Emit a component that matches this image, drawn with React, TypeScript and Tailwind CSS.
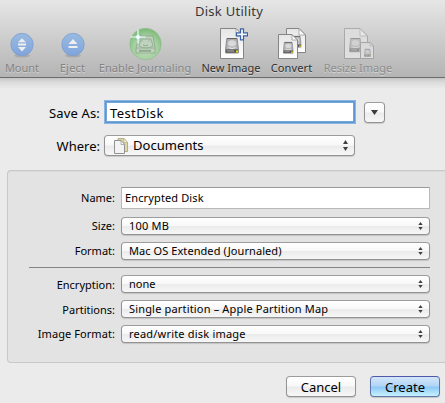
import React from "react";

function Drive({ x, y, s = 1 }: { x: number; y: number; s?: number }) {
  return (
    <g transform={`translate(${x} ${y}) scale(${s})`}>
      <path d="M1.8.5h10.4l1.1 9.5v5H.7v-5z" fill="#b4b4b7" stroke="#858588" strokeWidth=".9" />
      <path d="M2 .6h10" stroke="#5f5f62" strokeWidth="1" />
      <ellipse cx="7" cy="5.4" rx="4.6" ry="3.6" fill="#d9d9dc" stroke="#9d9da2" strokeWidth=".6" />
      <path d="M3.5 9.6q3.5 1.8 7 0" stroke="#f2f2f2" fill="none" />
      <path d="M.8 11.3h12.4v3.4H.8z" fill="#59595c" />
      <path d="M2 12.2h7v1.4H2z" fill="#98989b" />
      <path d="M11 12.5h2v2h-2z" fill="#ecd900" />
    </g>
  );
}

function Doc({ x, y, w, h, f }: { x: number; y: number; w: number; h: number; f: number }) {
  return (
    <g transform={`translate(${x} ${y})`}>
      <path d={`M.5.5H${w - f}L${w - 0.5} ${f}V${h - 0.5}H.5z`} fill="url(#paper)" stroke="#858585" />
      <path d={`M${w - f} .8V${f}H${w - 0.8}z`} fill="#fff" stroke="#9a9a9a" strokeWidth=".8" />
    </g>
  );
}

function Paper() {
  return (
    <defs>
      <linearGradient id="paper" x1="0" y1="0" x2="0" y2="1">
        <stop offset="0" stopColor="#e5e5e5" />
        <stop offset="1" stopColor="#ffffff" />
      </linearGradient>
      <radialGradient id="orb" cx=".5" cy=".65" r=".6">
        <stop offset="0" stopColor="#bfdcbc" />
        <stop offset=".65" stopColor="#a4cfa0" />
        <stop offset="1" stopColor="#82bd7c" />
      </radialGradient>
      <linearGradient id="blue" x1="0" y1="0" x2="0" y2="1">
        <stop offset="0" stopColor="#99bbe0" />
        <stop offset="1" stopColor="#80a4dc" />
      </linearGradient>
    </defs>
  );
}

function BlueDisc({ children }: { children: React.ReactNode }) {
  return (
    <svg width="26" height="32" viewBox="0 0 26 32" className="shrink-0">
      <Paper />
      <ellipse cx="13" cy="27.6" rx="8" ry="2" fill="#8d8d8d" opacity=".45" />
      <circle cx="13" cy="16.5" r="11.2" fill="url(#blue)" stroke="#799bcb" strokeWidth=".7" />
      <g fill="#eeeeef">{children}</g>
    </svg>
  );
}

function Tool({ box, label, tone, children }: { box: string; label: string; tone: string; children: React.ReactNode }) {
  return (
    <div className={`flex shrink-0 flex-col items-center ${box}`}>
      {children}
      <span className={`mt-px whitespace-nowrap text-[11px] leading-[14px] [text-shadow:0_1px_0_#ffffff66] ${tone}`}>{label}</span>
    </div>
  );
}

function Arrows({ big = false }: { big?: boolean }) {
  return (
    <svg width="5" height={big ? 11 : 8} viewBox={big ? "0 0 5 11" : "0 0 5 8"} className="ml-auto shrink-0" fill="#404040">
      {big ? <path d="M2.5 0 5 4H0zM2.5 11 5 7H0z" /> : <path d="M2.5 0 4.7 3H.3zM2.5 8 4.7 5H.3z" />}
    </svg>
  );
}

const face =
  "rounded-[4px] border border-[#929292] border-t-[#9c9c9c] bg-[linear-gradient(#ffffff,#f8f8f8_48%,#ebebeb_52%,#f7f7f7)] shadow-[0_1px_1px_#00000024]";

function Field({ label, value, spacing, labelStyle }: { label: string; value: string; spacing: string; labelStyle: string }) {
  return (
    <div className="mt-[7px] flex h-[18px] items-center">
      <span className={`w-[107px] shrink-0 whitespace-nowrap text-right text-[11px] leading-[18px] ${labelStyle}`}>{label}</span>
      <div className={`ml-[6px] flex h-[18px] w-[309px] shrink-0 items-center pl-[7px] pr-[6px] ${face}`}>
        <span className={`whitespace-nowrap text-[11px] leading-[16px] ${spacing}`}>{value}</span>
        <Arrows />
      </div>
    </div>
  );
}

export default function App() {
  return (
    <div className="h-[403px] w-[445px] overflow-hidden bg-[#ebebeb] font-['Noto_Sans','Open_Sans',sans-serif] text-black">
      <header className="h-[78px] border-b border-[#6c6c6c] bg-[linear-gradient(#e6e6e6,#d2d2d2_40%,#b4b4b4)]">
        <h1 className="h-[28px] pl-[195px] pt-[2px] text-[13px] leading-[18px] tracking-[0.26px] text-[#383838]">Disk Utility</h1>
        <div className="flex">
          <Tool box="w-[44px]" label="Mount" tone="text-[#848484]">
            <BlueDisc>
              <path d="M13 10.2 17 14.3H9zM9 15.6h8v2H9zM9 19h8L13 23.4z" />
            </BlueDisc>
          </Tool>
          <Tool box="w-[57px]" label="Eject" tone="text-[#848484] tracking-[0.2px]">
            <BlueDisc>
              <path d="M13 11 17.5 16h-9zM8.5 18h9v2h-9z" />
            </BlueDisc>
          </Tool>
          <Tool box="w-[88px]" label="Enable Journaling" tone="text-[#848484] tracking-[0.1px]">
            <svg width="34" height="32" viewBox="0 0 34 32" className="shrink-0">
              <circle cx="17.5" cy="16" r="15.7" fill="url(#orb)" stroke="#8cbb88" strokeWidth=".6" />
              <g fill="none" stroke="#819b81" opacity=".75">
                <path d="M11 8h14l2 12v5H8v-5z" fill="#c5d2c3" strokeWidth=".8" />
                <path d="M13 11h10l2 7q-7 4-14 0zM8 20h19" strokeWidth=".8" />
                <path d="M11 22.8h12" strokeWidth="2" />
                <path d="M14 12.5v1M21 12.5v1M15 17q3 1.5 5 0" strokeWidth="1" />
              </g>
              <g stroke="#e9ffff" strokeLinecap="round">
                <path d="M3 9h14M10 2v13" strokeWidth="1.2" />
                <path d="m7 6 6 6m0-6-6 6" stroke="#78b8bd" strokeWidth=".7" />
              </g>
              <circle cx="10" cy="9" r="2" fill="#f4ffff" />
            </svg>
          </Tool>
          <Tool box="w-[84px]" label="New Image" tone="text-[#303030]">
            <svg width="34" height="32" viewBox="0 0 34 32" className="shrink-0">
              <Doc x={6} y={0} w={24} h={31} f={8} />
              <Drive x={11} y={10} />
              <path d="M26.5.8h3v4h4v3h-4v4h-3v-4h-4v-3h4z" fill="#f4f7fc" stroke="#3b62a6" strokeWidth="1.2" />
            </svg>
          </Tool>
          <Tool box="w-[37px]" label="Convert" tone="text-[#303030] tracking-[0.15px]">
            <svg width="30" height="32" viewBox="0 0 30 32" className="shrink-0">
              <Doc x={9} y={0} w={20} h={25} f={7} />
              <Drive x={14} y={8} s={0.75} />
              <Doc x={1} y={6} w={20} h={25} f={6} />
              <Drive x={6} y={14} s={0.75} />
            </svg>
          </Tool>
          <Tool box="w-[96px]" label="Resize Image" tone="text-[#8d8d8d]">
            <svg width="32" height="32" viewBox="0 0 32 32" className="shrink-0 opacity-50">
              <Doc x={2} y={0} w={24} h={31} f={8} />
              <Drive x={7} y={10} s={0.92} />
              <Doc x={18} y={14} w={14} h={17} f={4} />
              <Drive x={22} y={21} s={0.5} />
            </svg>
          </Tool>
        </div>
      </header>
      <div className="h-[22px] bg-[linear-gradient(#c5c5c5,#dcdcdc_20%,#ebebeb_50%)]" />
      <div className="flex h-[24px] items-center">
        <span className="w-[100px] whitespace-nowrap pt-[2px] text-right text-[13px] leading-[20px] tracking-[0.15px]">Save As:</span>
        <div className="ml-[5px] flex h-[22px] w-[250px] items-center border border-[#5c97d4] bg-white pl-[4px] shadow-[inset_0_0_0_1px_#72a7dc,0_0_0_1px_#8bb6e2]">
          <span className="pt-px text-[13px] leading-[20px] tracking-[0.4px]">TestDisk</span>
        </div>
        <div className={`ml-[9px] flex h-[21px] w-[21px] items-center justify-center ${face}`}>
          <svg width="7" height="5" viewBox="0 0 7 5" fill="#3d3d3d"><path d="M0 0h7L3.5 5z" /></svg>
        </div>
      </div>
      <div className="mt-[11px] flex h-[21px] items-center">
        <span className="w-[100px] whitespace-nowrap text-right text-[13px] leading-[20px]">Where:</span>
        <div className={`ml-[4px] flex h-[21px] w-[251px] items-center pl-[9px] pr-[6px] ${face}`}>
          <svg width="14" height="16" viewBox="0 0 14 16">
            <path d="M4 .5h6l3.5 4v9H4z" fill="#ddd6a5" stroke="#a79f76" strokeWidth=".8" />
            <path d="M10 .5v4h3.5z" fill="#fffde5" stroke="#aaa17c" strokeWidth=".6" />
            <path d="M.5 2.5H7l3.5 4v9H.5z" fill="#f3f3f3" stroke="#929292" />
            <path d="M7 2.5v4h3.5z" fill="#fff" stroke="#929292" strokeWidth=".7" />
          </svg>
          <span className="ml-[5px] whitespace-nowrap text-[13px] leading-[19px] tracking-[0.05px]">Documents</span>
          <Arrows big />
        </div>
      </div>
      <section className="ml-[7px] mt-[14px] h-[193px] rounded-l-[4px] border border-r-0 border-[#c8c8c8] bg-[#e3e3e3] pt-[16px] shadow-[inset_0_1px_1px_#00000008]">
        <div className="mb-[8px] flex h-[22px] items-center">
          <span className="w-[107px] shrink-0 text-right text-[11px] leading-[18px]">Name:</span>
          <div className="ml-[6px] flex h-[22px] w-[309px] shrink-0 items-center border border-[#b9b9b9] border-t-[#9a9a9a] bg-white pb-px pl-[3px]">
            <span className="whitespace-nowrap text-[11px] leading-[18px] tracking-[0.13px]">Encrypted Disk</span>
          </div>
        </div>
        <Field label="Size:" value="100 MB" spacing="tracking-[0.2px]" labelStyle="" />
        <Field label="Format:" value="Mac OS Extended (Journaled)" spacing="tracking-[0.07px]" labelStyle="" />
        <div className="ml-[21px] mt-[7px] h-px w-[401px] bg-[#858585]" />
        <Field label="Encryption:" value="none" spacing="" labelStyle="pt-[2px]" />
        <Field label="Partitions:" value="Single partition – Apple Partition Map" spacing="tracking-[0.17px]" labelStyle="pt-[2px]" />
        <Field label="Image Format:" value="read/write disk image" spacing="tracking-[0.2px]" labelStyle="tracking-[0.07px]" />
      </section>
      <footer className="mt-[13px] flex gap-[14px] pl-[286px]">
        <button className={`h-[21px] w-[70px] text-[13px] leading-[18px] ${face}`}>Cancel</button>
        <button className="h-[21px] w-[70px] rounded-[4px] border border-[#5f77a8] border-t-[#5158ac] bg-[linear-gradient(#d3e6f9,#b0d5f6_48%,#8ac7f5_52%,#c7f2ff)] text-[13px] leading-[18px] shadow-[0_1px_1px_#00000028]">Create</button>
      </footer>
    </div>
  );
}
